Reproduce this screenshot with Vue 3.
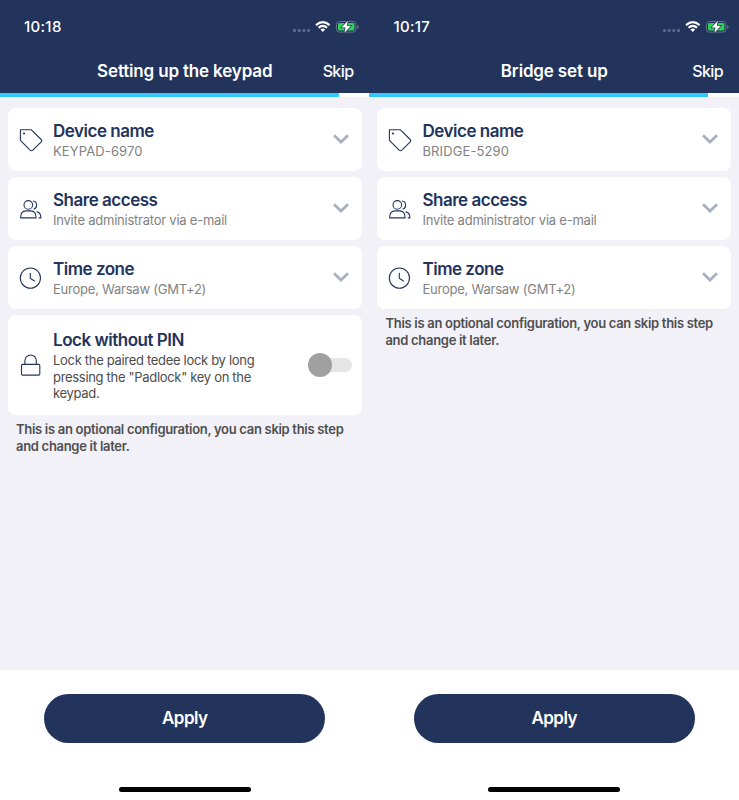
<script setup>
const baseRows = (name) => [
  { icon: 'tag', title: 'Device name', text: name, sub: 'serial' },
  { icon: 'people', title: 'Share access', text: 'Invite administrator via e-mail', sub: '' },
  { icon: 'clock', title: 'Time zone', text: 'Europe, Warsaw (GMT+2)', sub: '' },
]
const screens = [
  { time: '10:18', title: 'Setting up the keypad', rows: baseRows('KEYPAD-6970'), lock: true },
  { time: '10:17', title: 'Bridge set up', rows: baseRows('BRIDGE-5290'), lock: false },
]
</script>

<template>
  <main class="screens">
    <section v-for="s in screens" :key="s.title" class="screen">
      <header class="header">
        <div class="status">
          <span class="time">{{ s.time }}</span>
          <svg class="status-icons" width="66" height="14" viewBox="0 0 66 14">
            <g fill="#5b6887">
              <rect x="0" y="9" width="3" height="3" rx="1" /><rect x="4.7" y="9" width="3" height="3" rx="1" />
              <rect x="9.4" y="9" width="3" height="3" rx="1" /><rect x="14.1" y="9" width="3" height="3" rx="1" />
            </g>
            <g fill="none" stroke="#fff" stroke-width="2.1">
              <path d="M23 5.1Q29.8-1 36.6 5.1" /><path d="M25.5 7.8Q29.8 4.1 34.1 7.8" />
            </g>
            <path d="M27.4 9.5Q29.8 7.6 32.2 9.5L29.8 12z" fill="#fff" />
            <rect x="43.4" y="1.5" width="19.5" height="10.6" rx="3" fill="none" stroke="#67738e" />
            <path d="M64.2 5v4q1.4-.5 1.4-2t-1.4-2z" fill="#67738e" />
            <rect x="45" y="3" width="16.4" height="7.6" rx="1.6" fill="#30d158" />
            <path d="M54.8 .7 48.6 7.6h3.8L51.4 13l6.4-7.2h-4z" fill="#fff" stroke="#23345c" stroke-width="1.4" paint-order="stroke" />
          </svg>
        </div>
        <nav class="nav">
          <span></span>
          <h1>{{ s.title }}</h1>
          <a class="skip">Skip</a>
        </nav>
      </header>
      <div class="progress"><div class="fill"></div></div>
      <div class="content">
        <article v-for="r in s.rows" :key="r.icon" class="card">
          <svg class="icon" width="24" height="24" viewBox="0 0 24 24" fill="none" stroke="#23345c" stroke-width="1.1" stroke-linejoin="round" stroke-linecap="round">
            <template v-if="r.icon === 'tag'">
              <path d="M1.4 1.8H12.4L22.2 11.5Q23.3 12.7 22.2 13.8L13.9 22.1Q12.5 23.4 11.1 22.1L1.4 12.4z" />
              <circle cx="5" cy="5.5" r=".5" fill="#23345c" />
            </template>
            <template v-else-if="r.icon === 'people'">
              <circle cx="9.3" cy="7.9" r="4.3" />
              <path d="M1.6 20.9C1.6 16 4 13.9 7 13.9h4.6c3.2 0 5.5 2.1 5.5 7z" />
              <path d="M14.3 4c4.3.4 4.2 7.2.7 8M18 14.9c2.6.5 3.9 2.9 3.9 6h-1.8" />
            </template>
            <template v-else>
              <circle cx="11.4" cy="12.1" r="10.1" /><path d="M11.3 7.3v5l4.2 2.7" />
            </template>
          </svg>
          <div class="copy">
            <h2>{{ r.title }}</h2>
            <p :class="r.sub">{{ r.text }}</p>
          </div>
          <svg class="chevron" width="16" height="10" viewBox="0 0 16 10"><path d="M1 1.2 8 8l7-6.8" fill="none" stroke="#a8b0c0" stroke-width="2.7" /></svg>
        </article>
        <article v-if="s.lock" class="card lock">
          <svg class="icon" width="24" height="24" viewBox="0 0 24 24" fill="none" stroke="#23345c" stroke-width="1.1">
            <rect x="2.5" y="11.4" width="18.3" height="10.7" rx="1" /><path d="M5.9 11.4V7.7a5.7 5.7 0 0 1 11.4 0V11.4" />
          </svg>
          <div class="copy">
            <h2>Lock without PIN</h2>
            <p class="dark">Lock the paired tedee lock by long<br />pressing the "Padlock" key on the<br />keypad.</p>
          </div>
          <div class="toggle"><span class="track"><span class="thumb"></span></span></div>
        </article>
        <p class="hint">This is an optional configuration, you can skip this step<br />and change it later.</p>
      </div>
      <footer class="footer">
        <button>Apply</button>
        <div class="home"></div>
      </footer>
    </section>
  </main>
</template>

<style>
body { margin: 0; overflow: hidden; }
</style>
<style scoped>
.screens { display: grid; grid-template-columns: 369.45px 369.55px; width: 739px; height: 800px; font-family: Inter, "Liberation Sans", sans-serif; }
.screen { min-width: 0; display: flex; flex-direction: column; background: #f2f1f7; box-sizing: border-box; }
h1, h2, p { margin: 0; white-space: nowrap; }
.header { height: 92.5px; background: #23345c; color: #fff; flex: none; }
.status { height: 53px; display: flex; justify-content: space-between; align-items: center; padding: 0 10.4px 0 24px; }
.time { font-size: 15px; font-weight: 500; letter-spacing: .3px; line-height: 20px; }
.nav { height: 36px; display: grid; grid-template-columns: 1fr auto 1fr; align-items: center; padding: 0 16px; }
h1 { font-size: 17px; font-weight: 600; letter-spacing: -.16px; line-height: 22px; }
.skip { justify-self: end; font-size: 16px; font-weight: 500; letter-spacing: -.6px; }
.progress { height: 4.2px; background: #fff; flex: none; }
.fill { width: 338.7px; height: 100%; background: #34c9fc; }
.content { flex: 1; padding: 11.6px 0 0 8px; display: flex; flex-direction: column; gap: 6.3px; }
.card { width: 353.7px; height: 62.7px; background: #fff; border-radius: 8px; display: flex; align-items: center; padding: 0 13px 0 11px; box-sizing: border-box; }
.icon { flex: none; width: 24px; margin-right: 10px; }
.copy { flex: 1; padding-top: 1px; }
h2 { font-size: 17px; line-height: 21px; font-weight: 600; letter-spacing: -.48px; color: #23345c; }
.copy p { font-size: 13px; line-height: 16.5px; letter-spacing: -.23px; color: #828282; margin-top: 1px; margin-bottom: -1px; }
.copy p.serial { letter-spacing: .12px; }
.copy p.dark { color: #4c4c4c; letter-spacing: -.31px; }
.chevron { flex: none; margin-bottom: 2px; }
.lock { height: 99.7px; padding-right: 10px; }
.toggle { padding-left: 10px; }
.track { display: flex; align-items: center; width: 34px; height: 14px; border-radius: 7px; background: #e5e5e5; }
.thumb { width: 24px; height: 24px; margin-left: -10px; flex: none; border-radius: 50%; background: #a0a0a0; }
.hint { font-size: 13px; line-height: 16.5px; font-weight: 600; letter-spacing: -.3px; color: #4f4f50; padding-left: 8px; }
.footer { height: 130.3px; background: #fff; flex: none; display: flex; flex-direction: column; align-items: center; padding-top: 24px; box-sizing: border-box; }
button { width: 281px; height: 49px; padding: 0; border: 0; border-radius: 25px; background: #23345c; color: #fff; font: 600 17px Inter, sans-serif; letter-spacing: -.55px; flex: none; }
.home { width: 132px; height: 5px; border-radius: 3px; background: #000; margin-top: 44.5px; flex: none; }
</style>
